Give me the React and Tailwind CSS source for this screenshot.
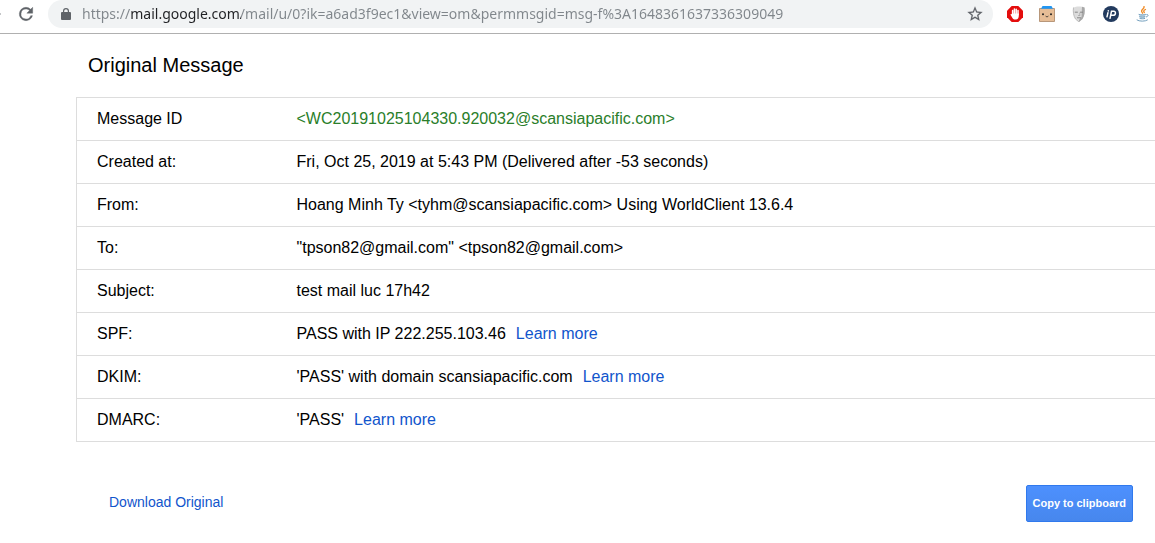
const FIELDS = [
  { label: "Message ID", value: "<WC20191025104330.920032@scansiapacific.com>", highlight: true },
  { label: "Created at:", value: "Fri, Oct 25, 2019 at 5:43 PM (Delivered after -53 seconds)" },
  { label: "From:", value: "Hoang Minh Ty <tyhm@scansiapacific.com> Using WorldClient 13.6.4" },
  { label: "To:", value: '"tpson82@gmail.com" <tpson82@gmail.com>' },
  { label: "Subject:", value: "test mail luc 17h42" },
  { label: "SPF:", value: "PASS with IP 222.255.103.46", help: "#spf" },
  { label: "DKIM:", value: "'PASS' with domain scansiapacific.com", help: "#dkim" },
  { label: "DMARC:", value: "'PASS'", help: "#dmarc" },
];

const ReloadIcon = () => (
  <svg viewBox="0 0 24 24" className="size-5" fill="#5f6368" stroke="#5f6368" strokeWidth=".5">
    <path d="M17.65 6.35A7.96 7.96 0 0 0 12 4a8 8 0 1 0 7.73 10h-2.08A6 6 0 1 1 12 6c1.66 0 3.14.69 4.22 1.78L13 11h7V4z" />
  </svg>
);

const LockIcon = () => (
  <svg viewBox="0 0 10 12" className="h-3 w-[10px] shrink-0" fill="#5f6368">
    <path d="M9 4H8V3a3 3 0 0 0-6 0v1H1a1 1 0 0 0-1 1v6a1 1 0 0 0 1 1h8a1 1 0 0 0 1-1V5a1 1 0 0 0-1-1zM3.2 4V3a1.8 1.8 0 0 1 3.6 0v1z" />
  </svg>
);

const StarIcon = () => (
  <svg viewBox="0 0 24 24" className="size-[18px]" fill="#5f6368" stroke="#5f6368" strokeWidth=".2">
    <path d="M22 9.24l-7.19-.62L12 2 9.19 8.63 2 9.24l5.46 4.73L5.82 21 12 17.27 18.18 21l-1.63-7.03zM12 15.4l-3.76 2.27 1-4.28-3.32-2.88 4.38-.38L12 6.1l1.71 4.04 4.38.38-3.32 2.88 1 4.28z" />
  </svg>
);

const BlockerIcon = () => (
  <svg viewBox="0 0 16 16" className="size-4">
    <path d="M4.7 0h6.6L16 4.7v6.6L11.3 16H4.7L0 11.3V4.7z" fill="#e40d0d" />
    <path d="M5.6 8.5V4.4M7.4 8V3M9.2 8V3.2M11 8.5V4.6" stroke="#fff" strokeWidth="1.5" strokeLinecap="round" />
    <path d="M4.9 7.5h6.9v2.4c0 2.2-1.3 3.7-3.4 3.7-1.8 0-2.7-.9-3.4-2.3L3.5 8.8c-.2-.8.8-1.100 1.400-.4z" fill="#fff" />
  </svg>
);

const BoxIcon = () => (
  <svg viewBox="0 0 16 16" className="size-4">
    <path d="M.5 2.5h15v13H.5z" fill="#e6bd96" stroke="#b8977a" />
    <path d="M3.5 0h9l1.5 2.8H2z" fill="#2196f3" />
    <circle cx="4" cy="8.2" r="1" fill="#222" />
    <circle cx="12" cy="8.2" r="1" fill="#222" />
    <path d="M6.6 10.1l.8.7.6-.7.6.7.8-.7" fill="none" stroke="#222" strokeWidth=".8" />
  </svg>
);

const MaskIcon = () => (
  <svg viewBox="0 0 16 16" className="size-4">
    <path d="M2.5 1.5C5 0 11 0 13.5 1.5c.6 4 .2 8-2 11.5L8 16l-3.5-3C2.300 9.500 1.900 5.500 2.500 1.500z" fill="#dcdcdc" />
    <path d="M11 .8l2.500.7c.6 4 .2 8-2 11.500L8 16v-2l2.500-3z" fill="#a8a8a8" />
    <path d="M2.500 1.500C2 5.500 2.300 9.500 4.500 13L8 16" fill="none" stroke="#b0b0b0" strokeWidth=".8" />
    <path d="M3.800 6.200h3M9 6.200h3M6 11.800h4" fill="none" stroke="#808080" strokeWidth=".9" />
    <path d="M7 9.500h2.200M8.800 6.500v3" fill="none" stroke="#a0a0a0" strokeWidth=".7" />
  </svg>
);

const IpIcon = () => (
  <svg viewBox="0 0 16 16" className="size-4">
    <circle cx="8" cy="8" r="8" fill="#223a5e" />
    <path d="M4.9 6.8L4 10.8M5.3 4.7v.3M7 12.3l1.5-7h2.3c2.5 0 2 4-.6 4H8.3" fill="none" stroke="#fff" strokeWidth="1.5" strokeLinecap="round" />
  </svg>
);

const JavaIcon = () => (
  <svg viewBox="0 0 16 16" className="size-4" fill="none" strokeLinecap="round">
    <path d="M9 .5c1 2-3.600 3-2.200 5.300l.8 1.500M10.500 3.500c-2 1-2.200 1.700-1.200 3" stroke="#f08a24" strokeWidth="1.300" />
    <path d="M4 8.500h6.500l-.6 4H4.800z" fill="#c5d9e6" />
    <path d="M4 8.500c1.500.6 5 .6 6.500 0M4.700 10.700c1.500.5 4 .5 5.200 0M5 12.500c1.200.4 3.500.4 4.700 0M2 14c2 1.600 8.500 1.600 10.500 0M11.800 8.500c2-.4 1.800 1.900-.4 2.400" stroke="#74a0be" strokeWidth="1" />
  </svg>
);

const EXTENSIONS = [
  { name: "Ad blocker", Icon: BlockerIcon },
  { name: "Box", Icon: BoxIcon },
  { name: "Mask", Icon: MaskIcon },
  { name: "IP lookup", Icon: IpIcon },
  { name: "Java", Icon: JavaIcon },
];

const BrowserBar = () => (
  <header className="flex h-[34px] items-start overflow-hidden border-b border-[#b0b0b0] bg-white">
    <div className="flex h-7 w-full min-w-0 items-center">
      <span className="h-[2px] w-px shrink-0 bg-[#c4c6c8]" />
      <button type="button" aria-label="Reload" className="ml-[15px] shrink-0">
        <ReloadIcon />
      </button>
      <div className="ml-3 flex h-7 min-w-0 flex-1 items-center rounded-full bg-[#f1f3f4] pr-[9px] pl-[13px]">
        <LockIcon />
        {/* the host part of the address is darker than the rest */}
        <input
          type="text"
          aria-label="Address"
          spellCheck={false}
          defaultValue="https://mail.google.com/mail/u/0?ik=a6ad3f9ec1&view=om&permmsgid=msg-f%3A1648361637336309049"
          className="ml-[11px] h-7 min-w-0 flex-1 bg-[linear-gradient(to_right,#80868b_49px,#202124_49px,#202124_159px,#80868b_159px)] bg-clip-text pb-px font-['Noto_Sans',sans-serif] text-sm text-transparent caret-black outline-none"
        />
        <button type="button" aria-label="Bookmark this page" className="ml-2 shrink-0">
          <StarIcon />
        </button>
      </div>
      <div className="ml-[14px] flex shrink-0 gap-4 pr-1">
        {EXTENSIONS.map(({ name, Icon }) => (
          <button key={name} type="button" aria-label={name}>
            <Icon />
          </button>
        ))}
      </div>
    </div>
  </header>
);

const App = () => {
  const handleCopy = () => {
    const text = FIELDS.map((f) => f.label + " " + f.value).join("\n");
    navigator.clipboard?.writeText(text);
  };

  return (
    <div className="min-h-screen bg-white font-['Liberation_Sans',Arial,sans-serif] text-black">
      <BrowserBar />
      <main className="pl-[76px]">
        <h1 className="pt-[17px] pb-[18px] pl-3 text-xl leading-7">Original Message</h1>
        <table className="w-full border-collapse border-y border-l border-[#ddd] text-base">
          <tbody>
            {FIELDS.map((field) => (
              <tr key={field.label} className="border-b border-[#ddd]">
                <th scope="row" className="w-[200px] py-[9px] pl-5 text-left font-normal">
                  {field.label}
                </th>
                <td className={"py-[9px] pl-5 " + (field.highlight ? "text-[#2a7e2a]" : "")}>
                  {field.value}
                  {field.help && (
                    <a href={field.help} className="ml-[10px] text-[#1155cc]">
                      Learn more
                    </a>
                  )}
                </td>
              </tr>
            ))}
          </tbody>
        </table>
        <div className="mt-[43px] flex items-start justify-between pr-[22px] pl-[33px]">
          <a href="#download" className="pt-[7px] text-sm text-[#1155cc]">
            Download Original
          </a>
          <button
            type="button"
            onClick={handleCopy}
            className="h-[37px] rounded-xs border border-[#3079ed] bg-linear-to-b from-[#4d90fe] to-[#4787ed] px-[6px] text-[11px] font-bold text-white"
          >
            Copy to clipboard
          </button>
        </div>
      </main>
    </div>
  );
};

export default App;
